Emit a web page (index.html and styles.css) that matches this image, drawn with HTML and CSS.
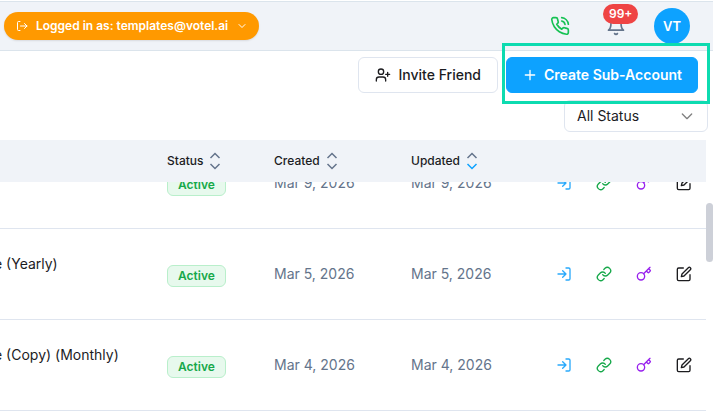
FILE: index.html
```html
<!DOCTYPE html>
<html lang="en">
<head>
  <meta charset="UTF-8">
  <meta name="viewport" content="width=device-width, initial-scale=1">
  <title>Sub-Accounts</title>
  <link rel="stylesheet" href="styles.css">
</head>
<body>

  <!-- Icons used more than once -->
  <svg class="sprite" aria-hidden="true">
    <symbol id="i-sort" viewBox="0 0 12 18">
      <path class="sort-up" d="M1.5 6 6 1.5 10.5 6"/>
      <path class="sort-down" d="M1.5 12 6 16.5 10.5 12"/>
    </symbol>
    <symbol id="i-login" viewBox="0 0 24 24">
      <path d="M15 3h4a2 2 0 0 1 2 2v14a2 2 0 0 1-2 2h-4M10 17l5-5-5-5M15 12H3"/>
    </symbol>
    <symbol id="i-link" viewBox="0 0 24 24">
      <path d="M10 13a5 5 0 0 0 7.54.54l3-3a5 5 0 0 0-7.07-7.07l-1.72 1.71"/>
      <path d="M14 11a5 5 0 0 0-7.54-.54l-3 3a5 5 0 0 0 7.07 7.07l1.71-1.71"/>
    </symbol>
    <symbol id="i-key" viewBox="0 0 24 24">
      <circle cx="7.5" cy="15.5" r="5.5"/>
      <path d="m21 2-9.6 9.6M15.5 7.5l2.3 2.3a1 1 0 0 0 1.4 0l2.1-2.1a1 1 0 0 0 0-1.4L19 4"/>
    </symbol>
    <symbol id="i-edit" viewBox="0 0 24 24">
      <path d="M11 3H4a2 2 0 0 0-2 2v15a2 2 0 0 0 2 2h15a2 2 0 0 0 2-2v-7"/>
      <path d="M18.5 2.5a2.12 2.12 0 0 1 3 3L12 15l-4 1 1-4z"/>
    </symbol>
  </svg>

  <header class="topbar">
    <button class="session-pill" type="button">
      <svg class="icon icon-xs" viewBox="0 0 24 24"><path d="M8 3H5a2 2 0 0 0-2 2v14a2 2 0 0 0 2 2h3M17 17l5-5-5-5M22 12H9"/></svg>
      <span>Logged in as: templates@votel.ai</span>
      <svg class="icon icon-xs" viewBox="0 0 24 24"><path d="m6 9 6 6 6-6"/></svg>
    </button>
    <div class="topbar-actions">
      <button class="icon-button call" type="button" aria-label="Calls">
        <svg class="icon icon-lg" viewBox="0 0 24 24">
          <path d="M22 16.92v3a2 2 0 0 1-2.18 2 19.79 19.79 0 0 1-8.63-3.07 19.5 19.5 0 0 1-6-6 19.79 19.79 0 0 1-3.07-8.67A2 2 0 0 1 4.11 2h3a2 2 0 0 1 2 1.72c.127.96.361 1.903.7 2.81a2 2 0 0 1-.45 2.11L8.09 9.91a16 16 0 0 0 6 6l1.27-1.27a2 2 0 0 1 2.11-.45c.907.339 1.85.573 2.81.7A2 2 0 0 1 22 16.92z"/>
          <path d="M14.05 2a9 9 0 0 1 8 7.94M14.05 6A5 5 0 0 1 18 10"/>
        </svg>
      </button>
      <button class="icon-button bell" type="button" aria-label="Notifications">
        <svg class="icon icon-lg" viewBox="0 0 24 24"><path d="M6 8a6 6 0 0 1 12 0c0 7 3 9 3 9H3s3-2 3-9M10.3 21a1.94 1.94 0 0 0 3.4 0"/></svg>
        <span class="badge">99+</span>
      </button>
      <button class="avatar" type="button">VT</button>
    </div>
  </header>

  <main class="page">
    <div class="toolbar">
      <button class="btn" type="button">
        <svg class="icon" viewBox="0 0 24 24"><circle cx="9" cy="7" r="4"/><path d="M16 21v-2a4 4 0 0 0-4-4H6a4 4 0 0 0-4 4v2M19 8v6M22 11h-6"/></svg>
        Invite Friend
      </button>
      <div class="create-wrap">
        <button class="btn btn-primary" type="button">
          <svg class="icon" viewBox="0 0 24 24"><path d="M12 5v14M5 12h14"/></svg>
          Create Sub-Account
        </button>
      </div>
    </div>

    <div class="filters">
      <div class="select-wrap">
        <select class="status-select" aria-label="Status filter">
          <option>All Status</option>
          <option>Active</option>
        </select>
        <svg class="icon select-arrow" viewBox="0 0 24 24"><path d="m5 9 7 7 7-7"/></svg>
      </div>
    </div>

    <div class="table-area">
      <div class="table-scroll">
        <table class="accounts">
          <thead>
            <tr>
              <th class="col-name"></th>
              <th class="col-status"><span class="th-label">Status <svg class="sort"><use href="#i-sort"/></svg></span></th>
              <th class="col-created"><span class="th-label">Created <svg class="sort"><use href="#i-sort"/></svg></span></th>
              <th class="col-updated"><span class="th-label">Updated <svg class="sort sort-desc"><use href="#i-sort"/></svg></span></th>
              <th class="col-actions"></th>
            </tr>
          </thead>
          <tbody>
            <tr>
              <td></td>
              <td><span class="status">Active</span></td>
              <td>Mar 9, 2026</td>
              <td>Mar 9, 2026</td>
              <td class="actions">
                <div class="action-list">
                  <button class="action login" type="button" aria-label="Log in"><svg class="icon"><use href="#i-login"/></svg></button>
                  <button class="action link" type="button" aria-label="Copy link"><svg class="icon"><use href="#i-link"/></svg></button>
                  <button class="action key" type="button" aria-label="Password"><svg class="icon"><use href="#i-key"/></svg></button>
                  <button class="action edit" type="button" aria-label="Edit"><svg class="icon"><use href="#i-edit"/></svg></button>
                </div>
              </td>
            </tr>
            <tr>
              <td class="name"><div class="name-text">e (Yearly)</div></td>
              <td><span class="status">Active</span></td>
              <td>Mar 5, 2026</td>
              <td>Mar 5, 2026</td>
              <td class="actions">
                <div class="action-list">
                  <button class="action login" type="button" aria-label="Log in"><svg class="icon"><use href="#i-login"/></svg></button>
                  <button class="action link" type="button" aria-label="Copy link"><svg class="icon"><use href="#i-link"/></svg></button>
                  <button class="action key" type="button" aria-label="Password"><svg class="icon"><use href="#i-key"/></svg></button>
                  <button class="action edit" type="button" aria-label="Edit"><svg class="icon"><use href="#i-edit"/></svg></button>
                </div>
              </td>
            </tr>
            <tr>
              <td class="name"><div class="name-text">e (Copy) (Monthly)</div></td>
              <td><span class="status">Active</span></td>
              <td>Mar 4, 2026</td>
              <td>Mar 4, 2026</td>
              <td class="actions">
                <div class="action-list">
                  <button class="action login" type="button" aria-label="Log in"><svg class="icon"><use href="#i-login"/></svg></button>
                  <button class="action link" type="button" aria-label="Copy link"><svg class="icon"><use href="#i-link"/></svg></button>
                  <button class="action key" type="button" aria-label="Password"><svg class="icon"><use href="#i-key"/></svg></button>
                  <button class="action edit" type="button" aria-label="Edit"><svg class="icon"><use href="#i-edit"/></svg></button>
                </div>
              </td>
            </tr>
            <tr>
              <td></td><td></td><td></td><td></td><td></td>
            </tr>
          </tbody>
        </table>
      </div>
      <div class="scroll-thumb"></div>
    </div>
  </main>

  <script>
    // start with the first row half under the sticky header
    document.querySelector(".table-scroll").scrollTop = 44;
  </script>

</body>
</html>
```
FILE: styles.css
```css
* {
  box-sizing: border-box;
}

body {
  margin: 0;
  height: 100vh;
  display: flex;
  flex-direction: column;
  overflow: hidden;
  font-family: Inter, "Liberation Sans", sans-serif;
  font-size: 14px;
  line-height: 20px;
  color: #1c1c1f;
  background: #ffffff;
}

button,
select {
  font: inherit;
  color: inherit;
  cursor: pointer;
}

.sprite {
  display: none;
}

.icon {
  width: 16px;
  height: 16px;
  flex: none;
  fill: none;
  stroke: currentColor;
  stroke-width: 2;
  stroke-linecap: round;
  stroke-linejoin: round;
}

.icon-xs {
  width: 12px;
  height: 12px;
}

.icon-lg {
  width: 20px;
  height: 20px;
}

/* Top bar */
.topbar {
  flex: none;
  display: flex;
  align-items: center;
  justify-content: space-between;
  height: 50px;
  margin-top: 1px;
  padding: 0 23px 0 4px;
  background: #f0f3f8;
  border-top: 1px solid #dbe4ec;
  border-bottom: 1px solid #dbe4ec;
}

.session-pill {
  display: flex;
  align-items: center;
  gap: 8px;
  height: 28px;
  padding: 0 11px 0 12px;
  font-size: 12px;
  font-weight: 600;
  color: #ffffff;
  background: #ff9900;
  border: none;
  border-radius: 14px;
  box-shadow: 0 1px 2px rgba(0, 0, 0, 0.1);
}

.topbar-actions {
  display: flex;
  align-items: center;
  gap: 20px;
}

.icon-button {
  position: relative;
  display: flex;
  padding: 8px;
  border: none;
  background: none;
}

.call {
  color: #16c253;
}

.bell {
  color: #64748b;
}

.badge {
  position: absolute;
  top: -4px;
  left: 5px;
  height: 20px;
  padding: 0 6px;
  font-size: 12px;
  font-weight: 600;
  color: #ffffff;
  background: #ef4444;
  border-radius: 10px;
}

.avatar {
  width: 36px;
  height: 36px;
  padding: 0;
  font-size: 13px;
  font-weight: 600;
  color: #ffffff;
  background: #0da2ff;
  border: none;
  border-radius: 50%;
}

/* Buttons above the table */
.page {
  flex: 1;
  min-height: 0;
  display: flex;
  flex-direction: column;
}

.toolbar {
  display: flex;
  justify-content: flex-end;
  gap: 8px;
  padding: 6px 15px 7px 0;
}

.btn {
  display: flex;
  align-items: center;
  gap: 8px;
  height: 36px;
  padding: 0 16px;
  font-weight: 500;
  background: #ffffff;
  border: 1px solid #dfe5ef;
  border-radius: 6px;
}

.btn-primary {
  gap: 6px;
  padding: 0 15px;
  color: #ffffff;
  font-weight: 600;
  background: #0da2ff;
  border-color: #0da2ff;
}

.create-wrap {
  position: relative;
}

/* highlight frame around the create button */
.create-wrap::after {
  content: "";
  position: absolute;
  z-index: 2;
  inset: -14px -12px -11px -4px;
  border: 3px solid #0ddbb0;
  pointer-events: none;
}

.filters {
  display: flex;
  justify-content: flex-end;
  padding: 0 5px 8px 0;
}

.select-wrap {
  position: relative;
}

.status-select {
  appearance: none;
  width: 144px;
  height: 32px;
  padding: 0 12px;
  background: #ffffff;
  border: 1px solid #dfe5ef;
  border-radius: 6px;
}

.select-arrow {
  position: absolute;
  top: 8px;
  right: 13px;
  color: #808080;
  pointer-events: none;
}

/* Table */
.table-area {
  position: relative;
  flex: 1;
  min-height: 0;
  padding-right: 7px;
}

.table-scroll {
  height: 100%;
  overflow: auto;
  scrollbar-width: none;
}

.scroll-thumb {
  position: absolute;
  top: 63px;
  right: 0;
  width: 7px;
  height: 59px;
  background: #cdd0d8;
  border-radius: 4px;
}

.accounts {
  width: 100%;
  table-layout: fixed;
  border-collapse: separate;
  border-spacing: 0;
}

.col-status {
  width: 107px;
}

.col-created {
  width: 137px;
}

.col-updated {
  width: 149px;
}

.col-actions {
  width: 162px;
}

th {
  position: sticky;
  top: 0;
  z-index: 1;
  height: 42px;
  padding: 0 16px;
  font-size: 12px;
  font-weight: 500;
  text-align: left;
  background: #f0f3f8;
}

.th-label {
  display: flex;
  align-items: center;
  gap: 6px;
}

.sort {
  width: 12px;
  height: 18px;
  fill: none;
  stroke: #64748b;
  stroke-width: 1.5;
}

.sort-desc {
  --down: #0da2ff;
}

.sort-down {
  stroke: var(--down, #64748b);
}

td {
  height: 91px;
  padding: 0 16px;
  color: #64748b;
  border-bottom: 1px solid #dfe5ef;
}

.name {
  padding: 0 16px 20px 0;
  color: #1c1c1f;
}

.name-text {
  margin-left: -6px;
  white-space: nowrap;
}

.status {
  display: inline-block;
  margin-top: 4px;
  padding: 0 10px;
  font-size: 12px;
  font-weight: 600;
  color: #16a84a;
  background: #e7f9ed;
  border: 1px solid #b9efcb;
  border-radius: 6px;
}

.actions {
  padding: 0;
}

.action-list {
  display: flex;
}

.action {
  display: flex;
  padding: 12px;
  border: none;
  background: none;
}

.login {
  color: #29a9fb;
}

.link {
  color: #16a84a;
}

.key {
  color: #9820ee;
}

.edit {
  color: #1c1c1f;
}
```
